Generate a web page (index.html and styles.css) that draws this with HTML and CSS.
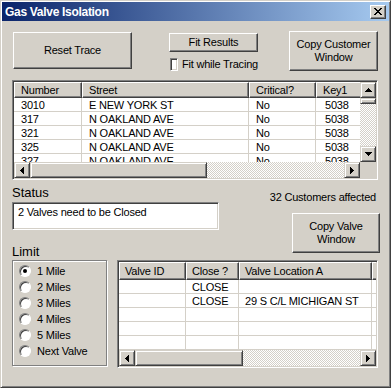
FILE: index.html
```html
<!DOCTYPE html>
<html lang="en">
<head>
    <meta charset="UTF-8">
    <title>Gas Valve Isolation</title>
    <link rel="stylesheet" href="styles.css">
</head>
<body>
    <div class="window">
        <div class="titlebar">
            <span class="title">Gas Valve Isolation</span>
            <span class="close">
                <svg width="8" height="7" viewBox="0 0 8 7"><path d="M0 0h2v1h-2zM6 0h2v1h-2zM1 1h2v1h-2zM5 1h2v1h-2zM2 2h4v1h-4zM3 3h2v1h-2zM2 4h4v1h-4zM1 5h2v1h-2zM5 5h2v1h-2zM0 6h2v1h-2zM6 6h2v1h-2z"/></svg>
            </span>
        </div>

        <div class="client">
            <div class="top-row">
                <button class="btn btn-reset">Reset Trace</button>
                <div class="fit">
                    <button class="btn btn-fit">Fit Results</button>
                    <label class="check"><span class="checkbox"></span>Fit while Tracing</label>
                </div>
                <button class="btn btn-copy">Copy Customer<br>Window</button>
            </div>

            <div class="grid-box customers">
                <div class="grid-view">
                    <div class="row head">
                        <div class="hcell">Number</div>
                        <div class="hcell">Street</div>
                        <div class="hcell">Critical?</div>
                        <div class="hcell key">Key1</div>
                    </div>
                    <div class="row"><div class="cell">3010</div><div class="cell">E NEW YORK ST</div><div class="cell">No</div><div class="cell key">5038</div></div>
                    <div class="row"><div class="cell">317</div><div class="cell">N OAKLAND AVE</div><div class="cell">No</div><div class="cell key">5038</div></div>
                    <div class="row"><div class="cell">321</div><div class="cell">N OAKLAND AVE</div><div class="cell">No</div><div class="cell key">5038</div></div>
                    <div class="row"><div class="cell">325</div><div class="cell">N OAKLAND AVE</div><div class="cell">No</div><div class="cell key">5038</div></div>
                    <div class="row"><div class="cell">327</div><div class="cell">N OAKLAND AVE</div><div class="cell">No</div><div class="cell key">5038</div></div>
                </div>
                <div class="vscroll">
                    <div class="sb-btn"><svg width="7" height="4"><path d="M3 0h1v1h-1zM2 1h3v1h-3zM1 2h5v1h-5zM0 3h7v1h-7z"/></svg></div>
                    <div class="thumb vthumb"></div>
                    <div class="track"></div>
                    <div class="sb-btn"><svg width="7" height="4"><path d="M0 0h7v1h-7zM1 1h5v1h-5zM2 2h3v1h-3zM3 3h1v1h-1z"/></svg></div>
                </div>
                <div class="hscroll">
                    <div class="sb-btn"><svg width="4" height="7"><path d="M3 0h1v7h-1zM2 1h1v5h-1zM1 2h1v3h-1zM0 3h1v1h-1z"/></svg></div>
                    <div class="thumb cust-thumb"></div>
                    <div class="track"></div>
                    <div class="sb-btn"><svg width="4" height="7"><path d="M0 0h1v7h-1zM1 1h1v5h-1zM2 2h1v3h-1zM3 3h1v1h-1z"/></svg></div>
                </div>
                <div class="corner"></div>
            </div>

            <div class="mid">
                <div class="mid-left">
                    <div class="label">Status</div>
                    <div class="status-box">2 Valves need to be Closed</div>
                    <div class="label limit-label">Limit</div>
                </div>
                <div class="mid-right">
                    <div class="affected">32 Customers affected</div>
                    <button class="btn btn-valve">Copy Valve<br>Window</button>
                </div>
            </div>

            <div class="bottom">
                <div class="limit-group">
                    <div class="radio-row"><span class="radio checked"></span>1 Mile</div>
                    <div class="radio-row"><span class="radio"></span>2 Miles</div>
                    <div class="radio-row"><span class="radio"></span>3 Miles</div>
                    <div class="radio-row"><span class="radio"></span>4 Miles</div>
                    <div class="radio-row"><span class="radio"></span>5 Miles</div>
                    <div class="radio-row"><span class="radio"></span>Next Valve</div>
                </div>

                <div class="grid-box valves">
                    <div class="grid-view">
                        <div class="row head">
                            <div class="hcell">Valve ID</div>
                            <div class="hcell">Close ?</div>
                            <div class="hcell">Valve Location A</div>
                            <div class="hcell"></div>
                        </div>
                        <div class="row"><div class="cell"></div><div class="cell">CLOSE</div><div class="cell"></div><div class="cell"></div></div>
                        <div class="row"><div class="cell"></div><div class="cell">CLOSE</div><div class="cell">29 S C/L MICHIGAN ST</div><div class="cell"></div></div>
                        <div class="row"><div class="cell"></div><div class="cell"></div><div class="cell"></div><div class="cell"></div></div>
                        <div class="row"><div class="cell"></div><div class="cell"></div><div class="cell"></div><div class="cell"></div></div>
                        <div class="row"><div class="cell"></div><div class="cell"></div><div class="cell"></div><div class="cell"></div></div>
                    </div>
                    <div class="hscroll">
                        <div class="sb-btn"><svg width="4" height="7"><path d="M3 0h1v7h-1zM2 1h1v5h-1zM1 2h1v3h-1zM0 3h1v1h-1z"/></svg></div>
                        <div class="thumb valve-thumb"></div>
                        <div class="track"></div>
                        <div class="sb-btn"><svg width="4" height="7"><path d="M0 0h1v7h-1zM1 1h1v5h-1zM2 2h1v3h-1zM3 3h1v1h-1z"/></svg></div>
                    </div>
                </div>
            </div>
        </div>
    </div>
</body>
</html>
```

FILE: styles.css
```css
body {
    margin: 0;
    font-family: "Liberation Sans", Arial, sans-serif;
    font-size: 11px;
    letter-spacing: -0.2px;
    color: #000;
}

.window {
    width: 391px;
    height: 388px;
    box-sizing: border-box;
    background-color: #d4d0c8;
    border: 1px solid;
    border-color: #d4d0c8 #404040 #404040 #d4d0c8;
    box-shadow: inset 1px 1px #fff, inset -1px -1px #808080;
    padding: 1px;
}

.titlebar {
    height: 19px;
    display: flex;
    align-items: center;
    padding: 0 3px;
    background: linear-gradient(to right, #0a246a, #a6caf0);
}

    .titlebar .title {
        color: #fff;
        font-weight: bold;
        font-size: 12px;
        letter-spacing: -0.3px;
    }

    .titlebar .close {
        margin-left: auto;
        width: 16px;
        height: 14px;
        box-sizing: border-box;
        display: flex;
        align-items: center;
        justify-content: center;
        background-color: #d4d0c8;
        border: 1px solid;
        border-color: #fff #404040 #404040 #fff;
        box-shadow: inset -1px -1px #808080;
    }

.client {
    padding: 10px 11px 0 10px;
}

/* classic raised button */
.btn {
    font: inherit;
    letter-spacing: inherit;
    line-height: 13px;
    padding: 0;
    color: #000;
    background-color: #d4d0c8;
    box-sizing: border-box;
    border: 1px solid;
    border-color: #fff #404040 #404040 #fff;
    box-shadow: inset -1px -1px #808080, inset 1px 1px #d4d0c8;
    text-align: center;
}

.top-row {
    display: flex;
    align-items: flex-start;
    height: 40px;
}

.btn-reset {
    margin: 1px 0 0 1px;
    width: 119px;
    height: 37px;
}

.fit {
    margin-left: 37px;
    width: 89px;
    display: flex;
    flex-direction: column;
}

.btn-fit {
    margin-top: 2px;
    height: 19px;
}

.check {
    margin-top: 5px;
    padding-left: 1px;
    height: 14px;
    display: flex;
    align-items: center;
    gap: 4px;
    white-space: nowrap;
}

.checkbox {
    width: 13px;
    height: 13px;
    box-sizing: border-box;
    background-color: #fff;
    border: 1px solid;
    border-color: #808080 #fff #fff #808080;
    box-shadow: inset 1px 1px #404040, inset -1px -1px #d4d0c8;
}

.btn-copy {
    margin-left: auto;
    width: 89px;
    height: 40px;
}

/* list views */
.grid-box {
    box-sizing: border-box;
    background-color: #fff;
    border: 1px solid;
    border-color: #808080 #fff #fff #808080;
    box-shadow: inset 1px 1px #404040, inset -1px -1px #d4d0c8;
    padding: 1px;
    display: grid;
}

.customers {
    margin-top: 9px;
    height: 100px;
    grid-template-columns: 1fr 16px;
    grid-template-rows: 1fr 16px;
}

.valves {
    width: 261px;
    height: 108px;
    grid-template-columns: 1fr;
    grid-template-rows: 1fr 16px;
}

.grid-view {
    overflow: hidden;
    background-color: #fff;
}

.row {
    display: grid;
    height: 14px;
}

.customers .row {
    grid-template-columns: 68px 167px 67px 60px;
}

.valves .row {
    grid-template-columns: 67px 53px 133px 20px;
}

.row.head {
    height: 16px;
}

.valves .row.head {
    height: 18px;
}

.hcell {
    box-sizing: border-box;
    background-color: #d4d0c8;
    border: 1px solid;
    border-color: #fff #404040 #404040 #fff;
    box-shadow: inset -1px -1px #808080;
    padding-left: 6px;
    line-height: 14px;
    white-space: nowrap;
    overflow: hidden;
}

.valves .hcell {
    line-height: 16px;
    padding-left: 5px;
}

.cell {
    box-sizing: border-box;
    border-right: 1px solid #d4d0c8;
    border-bottom: 1px solid #d4d0c8;
    padding-left: 7px;
    line-height: 14px;
    white-space: nowrap;
    overflow: hidden;
}

.valves .cell {
    padding-left: 6px;
}

.cell.key {
    padding-left: 9px;
}

/* scrollbars */
.vscroll {
    display: flex;
    flex-direction: column;
}

.hscroll {
    display: flex;
}

.sb-btn,
.thumb {
    box-sizing: border-box;
    background-color: #d4d0c8;
    border: 1px solid;
    border-color: #d4d0c8 #404040 #404040 #d4d0c8;
    box-shadow: inset 1px 1px #fff, inset -1px -1px #808080;
}

.sb-btn {
    width: 16px;
    height: 16px;
    flex: none;
    display: flex;
    align-items: center;
    justify-content: center;
}

.track {
    flex: 1;
    background: repeating-conic-gradient(#d4d0c8 0 25%, #fff 0 50%) 0 0 / 2px 2px;
}

.vthumb {
    height: 6px;
    flex: none;
}

.cust-thumb {
    width: 177px;
    flex: none;
}

.valve-thumb {
    width: 108px;
    flex: none;
}

.corner {
    background-color: #d4d0c8;
}

/* status area */
.mid {
    margin-top: 4px;
    display: flex;
    justify-content: space-between;
}

.mid-left {
    width: 207px;
}

.label {
    font-size: 13px;
    letter-spacing: 0;
    line-height: 18px;
}

.limit-label {
    margin-top: 14px;
    line-height: 16px;
}

.status-box {
    height: 28px;
    box-sizing: border-box;
    background-color: #fff;
    border: 1px solid;
    border-color: #808080 #fff #fff #808080;
    box-shadow: inset 1px 1px #404040, inset -1px -1px #d4d0c8;
    padding: 2px 0 0 5px;
    line-height: 14px;
}

.mid-right {
    margin-right: -2px;
    display: flex;
    flex-direction: column;
    align-items: flex-end;
}

.affected {
    margin: 6px 4px 0 0;
    line-height: 14px;
}

.btn-valve {
    margin-top: 9px;
    width: 88px;
    height: 40px;
}

/* limit group */
.bottom {
    display: flex;
    gap: 10px;
}

.limit-group {
    width: 95px;
    height: 106px;
    box-sizing: border-box;
    border: 1px solid #808080;
    box-shadow: inset 1px 1px #fff, 1px 1px #fff;
    padding: 2px 0 0 6px;
}

.radio-row {
    height: 16px;
    display: flex;
    align-items: center;
    gap: 6px;
    white-space: nowrap;
}

.radio {
    position: relative;
    width: 12px;
    height: 12px;
    box-sizing: border-box;
    border-radius: 50%;
    background-color: #fff;
    border: 1px solid;
    border-color: #808080 #fff #fff #808080;
    box-shadow: inset 1px 1px #404040;
}

    .radio.checked::after {
        content: "";
        position: absolute;
        left: 3px;
        top: 3px;
        width: 4px;
        height: 4px;
        border-radius: 50%;
        background-color: #000;
    }
```
